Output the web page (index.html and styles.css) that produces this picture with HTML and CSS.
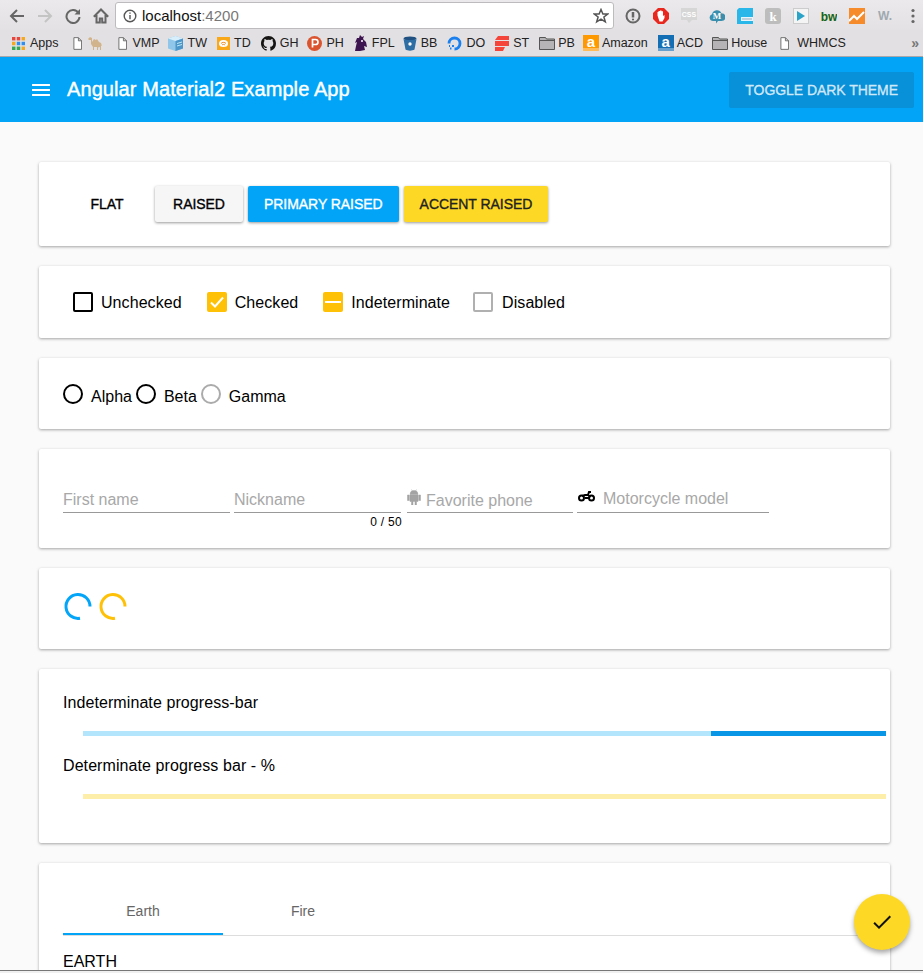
FILE: index.html

```html
<!DOCTYPE html>
<html lang="en">
<head>
    <meta charset="UTF-8">
    <meta name="viewport" content="width=device-width, initial-scale=1.0">
    <title>Angular Material2 Example App</title>
    <link rel="stylesheet" href="styles.css">
</head>
<body>
    <svg class="defs" width="0" height="0">
        <symbol id="doc" viewBox="0 0 10 14">
            <path d="M1 .5h5l3.500 3.500v9.500h-8.500z M6 .5v3.500h3.500" fill="#fff" stroke="#666"/>
        </symbol>
        <symbol id="folder" viewBox="0 0 16 14">
            <path d="M.5 3V1.500h6l1 1.500h8v10.500H.5z" fill="#b5b3b5" stroke="#555"/>
            <path d="M.5 4.500h15" stroke="#555"/>
        </symbol>
    </svg>
    <div class="window">
        <div class="browser">
            <div class="browser-bar">
                <div class="nav-icons">
                    <svg width="16" height="16" viewBox="0 0 16 16" fill="none" stroke="#666" stroke-width="2"><path d="M15 8H2M8 2 2 8l6 6"/></svg>
                    <svg width="16" height="16" viewBox="0 0 16 16" fill="none" stroke="#c4c4c4" stroke-width="2"><path d="M1 8h13M8 2l6 6-6 6"/></svg>
                    <svg width="16" height="16" viewBox="0 0 16 16" fill="none" stroke="#666" stroke-width="2"><path d="M13.500 5A6.500 6.500 0 1 0 14.500 9"/><path d="M15 1v5.500H9.500z" fill="#666" stroke="none"/></svg>
                    <svg width="16" height="16" viewBox="0 0 16 16" fill="none" stroke="#666" stroke-width="2"><path d="M.8 8.800 8 1.500l7.200 7.300M3.500 7v7.500h3.300v-4h2.400v4h3.300V7"/></svg>
                </div>
                <div class="address">
                    <svg width="14" height="14" viewBox="0 0 14 14" fill="none" stroke="#555" stroke-width="1.400"><circle cx="7" cy="7" r="5.800"/><path d="M7 6v4.300M7 3.400v1.400"/></svg>
                    <span class="url">localhost<span class="port">:4200</span></span>
                    <svg class="star" width="16" height="16" viewBox="0 0 16 16" fill="none" stroke="#555" stroke-width="1.500"><path d="M8 1.500 9.900 6h4.800l-3.800 3 1.400 4.800L8 11.100l-4.300 2.700L5.100 9 1.300 6h4.800z"/></svg>
                </div>
                <div class="ext-icons">
                    <svg width="16" height="16" viewBox="0 0 16 16"><circle cx="8" cy="8" r="6.500" fill="none" stroke="#666" stroke-width="2"/><path d="M8 4v5.500" stroke="#666" stroke-width="2.500"/><circle cx="8" cy="11.500" r="1.100" fill="#666"/></svg>
                    <svg width="16" height="16" viewBox="0 0 16 16"><path d="M5 0h6l5 5v6l-5 5H5l-5-5V5z" fill="#e8281e"/><path d="M4.500 7.500V4l1 0v-1l1.500 0v-.500h1.500v.700h1.500V8l1.500-1 0 3-2 3.500H6.500z" fill="#fff"/></svg>
                    <svg width="16" height="16" viewBox="0 0 16 16"><path d="M0 0h16v12h-5l-3 3-2-3H0z" fill="#d6d6d6"/><text x="8" y="9" class="ext-css">CSS</text></svg>
                    <svg width="16" height="16" viewBox="0 0 16 16"><path d="M4 13a3.500 3.500 0 0 1-1-6.800 5 5 0 0 1 9.500-1A3.800 3.800 0 0 1 12.500 13H9l-2 2.500V13z" fill="#3a8fae"/><text x="8" y="11" class="ext-m">M</text></svg>
                    <svg width="16" height="16" viewBox="0 0 16 16"><path d="M2 0h14v16H0V2z" fill="#29b6e8"/><path d="M4 9h12v4H4z" fill="#e6f6fc"/><path d="M5 11h10" stroke="#9ab" stroke-width="1"/></svg>
                    <svg width="16" height="16" viewBox="0 0 16 16"><rect width="16" height="16" rx="3" fill="#bdbdbd"/><text x="8" y="12.500" class="ext-k">k</text></svg>
                    <svg width="16" height="16" viewBox="0 0 16 16"><rect x=".5" y=".5" width="15" height="15" fill="#f4f4f4" stroke="#ccc"/><path d="M4 3l8 5-8 5z" fill="#29a3c7"/></svg>
                    <svg width="16" height="16" viewBox="0 0 16 16"><text x="8" y="13" class="ext-bw">bw</text></svg>
                    <svg width="16" height="16" viewBox="0 0 16 16"><rect width="16" height="16" fill="#f68b2c"/><path d="M0 13l5-5 3 3 7-7" fill="none" stroke="#fff" stroke-width="2"/></svg>
                    <svg width="16" height="16" viewBox="0 0 16 16"><text x="8" y="12" class="ext-w">W.</text></svg>
                    <svg width="16" height="16" viewBox="0 0 16 16" fill="#666"><circle cx="8" cy="2.500" r="1.600"/><circle cx="8" cy="8" r="1.600"/><circle cx="8" cy="13.500" r="1.600"/></svg>
                </div>
            </div>
            <div class="bookmarks">
                <div class="bookmark bookmark-apps">
                    <svg class="apps-icon" width="13" height="13" viewBox="0 0 13 13">
                        <rect width="3.400" height="3.400" fill="#e8453c"/><rect x="4.800" width="3.400" height="3.400" fill="#e8453c"/><rect x="9.600" width="3.400" height="3.400" fill="#f4a91f"/>
                        <rect y="4.800" width="3.400" height="3.400" fill="#f4a91f"/><rect x="4.800" y="4.800" width="3.400" height="3.400" fill="#2e8ff0"/><rect x="9.600" y="4.800" width="3.400" height="3.400" fill="#2e8ff0"/>
                        <rect y="9.600" width="3.400" height="3.400" fill="#34a853"/><rect x="4.800" y="9.600" width="3.400" height="3.400" fill="#34a853"/><rect x="9.600" y="9.600" width="3.400" height="3.400" fill="#f4a91f"/>
                    </svg>
                    <span>Apps</span>
                </div>
                <div class="bookmark bookmark-doc">
                    <svg width="9" height="13"><use href="#doc"/></svg>
                    <svg width="16" height="14" viewBox="0 0 16 14"><path d="M0 3 2 1l2 1v4l2-3 2 1 1-1 2 3 2 1 1 3-1-.500V14h-1v-3l-2 .500V14h-1v-3H6v3H5v-3L3 8V4H1z" fill="#d2b48c"/></svg>
                </div>
                <div class="bookmark bookmark-doc">
                    <svg width="9" height="13"><use href="#doc"/></svg>
                    <span>VMP</span>
                </div>
                <div class="bookmark bookmark-tight bookmark-tw">
                    <svg width="15" height="15" viewBox="0 0 15 15"><path d="M7.500 0 15 2.500v10L7.500 15 0 12.500v-10z" fill="#8fc6ea"/><path d="M0 2.500 7.500 5 15 2.500 7.500 0z" fill="#d8eefa"/><path d="M7.500 5v10L15 12.500v-10z" fill="#4d96c9"/><path d="M9 7.500l5-1.500M9 10l5-1.500" stroke="#dff" stroke-width=".800"/></svg>
                    <span>TW</span>
                </div>
                <div class="bookmark">
                    <svg width="13" height="13" viewBox="0 0 13 13"><rect width="13" height="13" fill="#f9a81a"/><ellipse cx="6.500" cy="6.500" rx="4.500" ry="3.500" fill="#fff"/><path d="M4 6.500c1-1.500 4-1.500 5 0M5 8c1-.800 2-.800 3 0" fill="none" stroke="#f08a1a"/></svg>
                    <span>TD</span>
                </div>
                <div class="bookmark">
                    <svg width="15" height="15" viewBox="0 0 16 16"><path fill="#161514" d="M8 0C3.580 0 0 3.580 0 8c0 3.540 2.290 6.530 5.470 7.590.4.070.55-.17.55-.38v-1.340c-2.230.48-2.700-1.070-2.700-1.070-.36-.92-.89-1.170-.89-1.170-.73-.5.050-.49.050-.49.800.060 1.220.82 1.220.82.720 1.220 1.870.87 2.330.66.070-.52.280-.87.510-1.070-1.780-.2-3.640-.89-3.640-3.950 0-.87.310-1.590.82-2.150-.08-.2-.36-1.020.08-2.120 0 0 .67-.21 2.200.82a7.600 7.600 0 0 1 4 0c1.530-1.040 2.200-.82 2.200-.82.44 1.100.16 1.920.08 2.120.51.560.82 1.270.82 2.150 0 3.070-1.870 3.750-3.650 3.950.29.250.54.730.54 1.480v2.190c0 .21.150.46.550.38A8 8 0 0 0 16 8c0-4.420-3.580-8-8-8z"/></svg>
                    <span>GH</span>
                </div>
                <div class="bookmark bookmark-snug">
                    <svg width="15" height="15" viewBox="0 0 15 15"><circle cx="7.500" cy="7.500" r="7.500" fill="#da552f"/><path d="M5.500 11.500v-8h3a2.500 2.500 0 0 1 0 5h-3" fill="none" stroke="#fff" stroke-width="1.700"/></svg>
                    <span>PH</span>
                </div>
                <div class="bookmark">
                    <svg width="14" height="16" viewBox="0 0 14 16"><path d="M6 0l2 2 2-1-1 3 3 3 1 5-3-1 1 4-5 1H1l1-5 1-4-2 1 2-5 2 0z" fill="#3d1450"/><circle cx="8" cy="6" r="1" fill="#fff"/></svg>
                    <span>FPL</span>
                </div>
                <div class="bookmark bookmark-tight">
                    <svg width="14" height="15" viewBox="0 0 14 15"><ellipse cx="7" cy="2.500" rx="6.500" ry="2" fill="#205081"/><path d="M.5 3l2 10.500c2 1.500 7 1.500 9 0l2-10.500c-3 1.300-10 1.300-13 0z" fill="#2d6ea5"/><circle cx="7" cy="8" r="1.700" fill="#fff"/></svg>
                    <span>BB</span>
                </div>
                <div class="bookmark">
                    <svg width="15" height="15" viewBox="0 0 15 15" fill="none"><path d="M7.500 13A5.500 5.500 0 1 0 2 7.500" stroke="#1a80f0" stroke-width="2.800"/><path d="M7 10H5M4.500 12.500H3M2 10h1" stroke="#1a80f0" stroke-width="1.800"/></svg>
                    <span>DO</span>
                </div>
                <div class="bookmark">
                    <svg width="14" height="15" viewBox="0 0 14 15" fill="#f5453a"><path d="M3 0h11v4H0z"/><path d="M0 5h11l3-0v5H0z"/><path d="M0 11h10l-2 4H0z"/></svg>
                    <span>ST</span>
                </div>
                <div class="bookmark bookmark-icon3">
                    <svg width="16" height="14"><use href="#folder"/></svg>
                    <span>PB</span>
                </div>
                <div class="bookmark bookmark-icon3 bookmark-tight">
                    <div class="amazon-icon amazon-orange">a</div>
                    <span>Amazon</span>
                </div>
                <div class="bookmark bookmark-icon3">
                    <div class="amazon-icon amazon-blue">a</div>
                    <span>ACD</span>
                </div>
                <div class="bookmark bookmark-icon3 bookmark-snug">
                    <svg width="16" height="14"><use href="#folder"/></svg>
                    <span>House</span>
                </div>
                <div class="bookmark bookmark-whmcs">
                    <svg width="9" height="13"><use href="#doc"/></svg>
                    <span>WHMCS</span>
                </div>
                <span class="more">»</span>
            </div>
        </div>

        <header class="toolbar">
            <div class="toolbar-title">
                <svg width="18" height="12" viewBox="0 0 18 12" fill="#fff"><path d="M0 0h18v2H0zM0 5h18v2H0zM0 10h18v2H0z"/></svg>
                <span>Angular Material2 Example App</span>
            </div>
            <button class="btn btn-toggle">TOGGLE DARK THEME</button>
        </header>

        <main class="content">
            <section class="card">
                <div class="btn-row">
                    <button class="btn btn-flat">FLAT</button>
                    <button class="btn btn-raised">RAISED</button>
                    <button class="btn btn-raised btn-primary">PRIMARY RAISED</button>
                    <button class="btn btn-raised btn-accent">ACCENT RAISED</button>
                </div>
            </section>

            <section class="card">
                <div class="check-row">
                    <label class="check"><span class="box"></span>Unchecked</label>
                    <label class="check"><span class="box box-on"><svg width="16" height="16" viewBox="0 0 16 16" fill="none" stroke="#fff" stroke-width="2"><path d="M2 8.500l4 4 8-9"/></svg></span>Checked</label>
                    <label class="check"><span class="box box-on"><span class="dash"></span></span>Indeterminate</label>
                    <label class="check check-off"><span class="box"></span>Disabled</label>
                </div>
            </section>

            <section class="card card-radio">
                <div class="radio-row">
                    <label class="radio"><span class="dot"></span>Alpha</label>
                    <label class="radio"><span class="dot"></span>Beta</label>
                    <label class="radio radio-off"><span class="dot"></span>Gamma</label>
                </div>
            </section>

            <section class="card card-form">
                <div class="form-row">
                    <div class="field-wrap">
                        <div class="field"><span class="placeholder">First name</span></div>
                    </div>
                    <div class="field-wrap">
                        <div class="field"><span class="placeholder">Nickname</span></div>
                        <div class="hint">0 / 50</div>
                    </div>
                    <div class="field-wrap field-phone">
                        <div class="field">
                            <svg width="14" height="16" viewBox="0 0 14 16" fill="#a3a3a3"><path d="M3 5.500a4 4 0 0 1 8 0zM3 6h8v6.500H9.500V16H8v-3.500H6V16H4.500v-3.500H3zM.5 6H2.300v5.500H.5zM11.700 6h1.800v5.500h-1.800zM4.500.5l1.200 2M9.500.5 8.300 2.500" stroke="#a3a3a3" stroke-width=".500"/></svg>
                            <span class="placeholder">Favorite phone</span>
                        </div>
                    </div>
                    <div class="field-wrap field-moto">
                        <div class="field">
                            <svg width="17" height="11" viewBox="0 0 17 11" fill="none" stroke="#000" stroke-width="2"><circle cx="3.500" cy="7" r="2.500"/><circle cx="13.500" cy="7" r="2.500"/><path d="M4 5l3-1h3l1-3h2M7 7h4l1-3"/></svg>
                            <span class="placeholder">Motorcycle model</span>
                        </div>
                    </div>
                </div>
            </section>

            <section class="card card-spinner">
                <svg class="spinner" width="30" height="30" viewBox="0 0 30 30" fill="none" stroke="#03a5f9" stroke-width="3"><path d="M27 14.500A12 12 0 1 0 17 26.300"/></svg>
                <svg class="spinner" width="30" height="30" viewBox="0 0 30 30" fill="none" stroke="#ffc107" stroke-width="3"><path d="M27 14.500A12 12 0 1 0 17 26.300"/></svg>
            </section>

            <section class="card card-progress">
                <div class="progress-label">Indeterminate progress-bar</div>
                <div class="progress progress-blue"><div class="progress-fill"></div></div>
                <div class="progress-label">Determinate progress bar - %</div>
                <div class="progress progress-yellow"></div>
            </section>

            <section class="card card-tabs">
                <div class="tabs">
                    <div class="tab tab-active">Earth</div>
                    <div class="tab">Fire</div>
                </div>
                <div class="tab-body">EARTH</div>
            </section>
        </main>

        <div class="window-edge"></div>

        <button class="fab">
            <svg width="24" height="24" viewBox="0 0 24 24"><path d="M9 16.200 4.800 12l-1.400 1.400L9 19 21 7l-1.400-1.400z" fill="#111"/></svg>
        </button>
    </div>
</body>
</html>
```

FILE: styles.css

```css
* {
    box-sizing: border-box;
}
html, body {
    margin: 0;
    height: 100%;
    overflow: hidden;
}
body {
    font-family: "Liberation Sans", Arial, sans-serif;
    font-size: 16px;
    color: #000;
}
.defs {
    position: absolute;
}
.window {
    position: relative;
    display: flex;
    flex-direction: column;
    height: 973px;
    background: #fafafa;
}

/* browser chrome */
.browser {
    flex: none;
    height: 57px;
    border-bottom: 1px solid #a9a7a9;
    background: #e2e0e2;
}
.browser-bar {
    display: flex;
    align-items: center;
    height: 30px;
    padding: 2px 0 1px 9px;
    background: linear-gradient(#ebe9eb, #e3e1e3);
}
.nav-icons {
    display: flex;
    gap: 12px;
    margin-right: 6px;
}
.address {
    display: flex;
    align-items: center;
    width: 499px;
    height: 27px;
    padding: 0 4px 0 7px;
    border: 1px solid #bdbbbd;
    border-radius: 3px;
    background: #fff;
}
.url {
    margin-left: 5px;
    font-size: 15px;
    color: #111;
}
.port {
    color: #777;
}
.star {
    margin-left: auto;
}
.ext-icons {
    display: flex;
    gap: 12px;
    margin-left: 11px;
}
.ext-css, .ext-m, .ext-k, .ext-bw, .ext-w {
    text-anchor: middle;
    font-weight: bold;
}
.ext-css {
    font-size: 7px;
    fill: #fff;
}
.ext-m {
    font-family: "Liberation Serif", serif;
    font-size: 9px;
    fill: #fff;
}
.ext-k {
    font-family: "Liberation Serif", serif;
    font-size: 13px;
    fill: #fff;
}
.ext-bw {
    font-size: 12px;
    fill: #146414;
}
.ext-w {
    font-size: 12px;
    fill: #9fa9b0;
}
.bookmarks {
    display: flex;
    align-items: center;
    gap: 10px;
    height: 26px;
    padding-left: 12px;
    font-size: 12.5px;
    color: #222;
}
.bookmark {
    display: flex;
    align-items: center;
    gap: 4px;
}
.bookmark-apps {
    gap: 5px;
}
.bookmark-doc {
    gap: 6px;
    margin-left: 4px;
}
.bookmark-tight {
    margin-left: -2px;
}
.bookmark-snug {
    margin-left: -1px;
}
.bookmark-tw {
    gap: 5px;
}
.bookmark-icon3 {
    gap: 3px;
}
.bookmark-whmcs {
    gap: 8px;
    margin-left: 3px;
}
.amazon-icon {
    width: 16px;
    height: 16px;
    font-size: 15px;
    font-weight: bold;
    line-height: 13px;
    text-align: center;
    color: #fff;
    border-bottom: 3px solid rgba(255, 255, 255, 0.35);
}
.amazon-orange {
    background: #f90;
}
.amazon-blue {
    background: #146eb4;
}
.more {
    margin-left: auto;
    padding-right: 4px;
    font-size: 14px;
    font-weight: bold;
    color: #777;
}

/* app toolbar */
.toolbar {
    flex: none;
    display: flex;
    align-items: center;
    justify-content: space-between;
    height: 65px;
    padding: 0 9px 0 32px;
    background: #02a4f8;
    color: #fff;
}
.toolbar-title {
    display: flex;
    align-items: center;
    gap: 17px;
    font-size: 20px;
    letter-spacing: 0.09px;
    -webkit-text-stroke: 0.4px #fff;
}
.btn {
    height: 36px;
    min-width: 88px;
    padding: 0 16px;
    border: 0;
    border-radius: 2px;
    background: none;
    font-family: inherit;
    font-size: 14px;
    letter-spacing: -0.05px;
    -webkit-text-stroke: 0.35px currentColor;
    color: #000;
}
.btn-toggle {
    background: #0891d9;
    color: rgba(255, 255, 255, 0.75);
}

/* cards */
.content {
    flex: 1;
    display: flex;
    flex-direction: column;
    gap: 20px;
    min-height: 0;
    padding: 40px 33px 0 39px;
    overflow: hidden;
}
.card {
    flex: none;
    padding: 24px;
    border-radius: 2px;
    background: #fff;
    box-shadow: 0 1px 3px rgba(0, 0, 0, 0.35);
}
.btn-row {
    display: flex;
    gap: 4px;
}
.btn-raised {
    background: #f6f6f6;
    box-shadow: 0 1px 3px rgba(0, 0, 0, 0.4);
}
.btn-primary {
    margin-left: 1px;
    background: #02a4f8;
    color: #fff;
}
.btn-accent {
    margin-left: 1px;
    background: #fdd925;
    color: #222;
}
.check-row {
    display: flex;
    gap: 25px;
    padding-left: 10px;
}
.check, .radio {
    display: flex;
    align-items: center;
    gap: 8px;
    height: 24px;
}
.check {
    padding-top: 2px;
    letter-spacing: 0.07px;
}
.check-off {
    gap: 9px;
    margin-left: -2px;
}
.box {
    display: flex;
    align-items: center;
    justify-content: center;
    width: 20px;
    height: 20px;
    margin-top: -2px;
    border: 2px solid #000;
    border-radius: 2px;
}
.box-on {
    border: 0;
    background: #ffc107;
}
.dash {
    width: 16px;
    height: 2px;
    background: #fff;
}
.check-off .box {
    border-color: #b0b0b0;
}
.card-radio {
    padding-bottom: 23px;
}
.radio-row {
    display: flex;
    gap: 4px;
}
.radio {
    padding-top: 5px;
}
.radio .dot {
    width: 20px;
    height: 20px;
    margin-top: -5px;
    border: 2px solid #000;
    border-radius: 50%;
}
.radio-off .dot {
    border-color: #ababab;
}
.card-form {
    padding-bottom: 20px;
}
.form-row {
    display: flex;
    gap: 4px;
}
.field-wrap {
    width: 167px;
}
.field-phone {
    width: 166px;
    margin-left: 2px;
}
.field-moto {
    width: 192px;
}
.field {
    display: flex;
    align-items: flex-end;
    gap: 5px;
    height: 40px;
    padding-bottom: 3px;
    border-bottom: 1px solid #999;
    line-height: 18px;
}
.placeholder {
    color: #a8a8a8;
}
.field-phone svg {
    margin-bottom: 4px;
}
.field-phone .placeholder {
    margin-bottom: -1px;
}
.field-moto .field {
    gap: 8px;
    padding-left: 1px;
}
.field-moto svg {
    margin-bottom: 7px;
}
.field-moto .placeholder {
    margin-bottom: 1px;
}
.hint {
    margin-top: 3px;
    margin-right: -1px;
    font-size: 12px;
    letter-spacing: 0.3px;
    line-height: 12px;
    text-align: right;
}
.card-spinner {
    display: flex;
    gap: 5px;
    padding-bottom: 27px;
}
.card-progress {
    padding-bottom: 44px;
}
.progress-label {
    margin-top: 20px;
    letter-spacing: 0.08px;
    line-height: 20px;
}
.progress-label:first-child {
    margin-top: 0;
}
.progress {
    height: 5px;
    margin: 18px -20px 0 20px;
}
.progress-blue {
    display: flex;
    justify-content: flex-end;
    background: #b3e5fc;
}
.progress-fill {
    width: 175px;
    background: #0a96e6;
}
.progress-yellow {
    background: #fdeeaa;
}
.card-tabs {
    padding-bottom: 0;
    height: 120px;
}
.tabs {
    display: flex;
    border-bottom: 1px solid #ddd;
}
.tab {
    width: 160px;
    height: 48px;
    font-size: 14px;
    line-height: 48px;
    text-align: center;
    color: #666;
}
.tab-active {
    border-bottom: 2px solid #02a4f8;
}
.tab-body {
    margin-top: 16px;
    line-height: 20px;
}
.window-edge {
    flex: none;
    height: 3px;
    border-top: 1px solid #777;
    background: #f0f0f0;
}
.fab {
    position: absolute;
    left: 854px;
    top: 894px;
    display: flex;
    align-items: center;
    justify-content: center;
    width: 56px;
    height: 56px;
    padding: 0;
    border: 0;
    border-radius: 50%;
    background: #fdd925;
    box-shadow: 0 3px 5px rgba(0, 0, 0, 0.35);
}
```
